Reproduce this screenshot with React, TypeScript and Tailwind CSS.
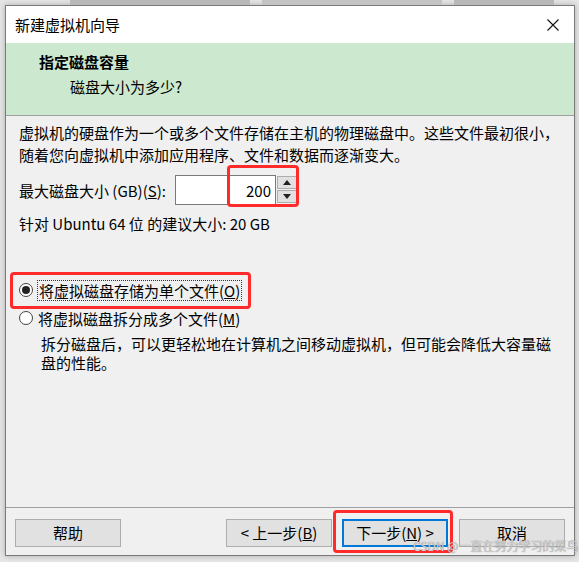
import React from 'react';

const font = "font-['Microsoft_YaHei','Noto_Sans_CJK_SC',sans-serif]";

const Radio: React.FC<{ checked?: boolean }> = ({ checked }) => (
    <span className="flex items-center justify-center w-[14px] h-[14px] rounded-full border border-[#444] bg-white">
        {checked && <span className="w-[8px] h-[8px] rounded-full bg-[#222]" />}
    </span>
);

const Button: React.FC<{ children: React.ReactNode; focused?: boolean; className?: string }> = ({ children, focused, className }) => (
    <div
        className={`flex items-center justify-center w-[106px] h-[28px] bg-[#e1e1e1] text-[15px] text-black ${
            focused ? 'border-2 border-[#0078d7]' : 'border border-[#adadad]'
        } ${className ?? ''}`}
    >
        {children}
    </div>
);

export default function App() {
    return (
        <div className={`relative w-[579px] h-[562px] overflow-hidden bg-[#e6e6e6] ${font}`}>
            {/* background strip behind the dialog */}
            <div className="flex gap-[12px] h-[5px] pl-[70px]">
                <div className="w-[180px] h-full bg-[#b8b8b8]" />
                <div className="w-[180px] h-full bg-[#c4c4c4]" />
                <div className="w-[100px] h-full bg-[#b8b8b8]" />
            </div>

            {/* dialog window */}
            <div className="ml-[5px] w-[570px] h-[551px] flex flex-col border border-[#7a7a7a] bg-[#f0f0f0] shadow-[0_0_6px_rgba(0,0,0,0.25)]">
                {/* title bar */}
                <div className="flex items-center justify-between h-[37px] bg-white pl-[9px] pr-[14px]">
                    <span className="text-[15px] text-black leading-none">新建虚拟机向导</span>
                    <svg width="12" height="12" viewBox="0 0 12 12" className="mr-[1px]">
                        <path d="M0.5 0.5 L11.5 11.5 M11.5 0.5 L0.5 11.5" stroke="#111" strokeWidth="1.1" />
                    </svg>
                </div>

                {/* green header */}
                <div className="h-[73px] bg-[#cce8cf] border-b border-[#a0a0a0] pt-[8px]">
                    <div className="pl-[33px] text-[15px] font-bold leading-[22px] text-black">指定磁盘容量</div>
                    <div className="pl-[64px] mt-[3px] text-[15px] leading-[22px] text-black">磁盘大小为多少?</div>
                </div>

                {/* body */}
                <div className="flex-1 flex flex-col px-[13px] pt-[6px] text-[15px] text-black">
                    <p className="leading-[22px] whitespace-nowrap">
                        虚拟机的硬盘作为一个或多个文件存储在主机的物理磁盘中。这些文件最初很小，
                        <br />
                        随着您向虚拟机中添加应用程序、文件和数据而逐渐变大。
                    </p>

                    <div className="flex items-center mt-[9px] h-[30px]">
                        <span className="w-[156px] leading-none">
                            最大磁盘大小 (GB)(<span className="underline">S</span>):
                        </span>
                        <div className="flex items-center justify-end w-[101px] h-[30px] bg-white border border-[#7a7a7a] pr-[4px] leading-none">
                            200
                        </div>
                        <div className="flex flex-col gap-[1px] ml-[1px] h-[28px]">
                            <div className="flex items-center justify-center w-[20px] h-[13px] bg-[#e1e1e1] border border-[#adadad]">
                                <svg width="8" height="5" viewBox="0 0 8 5"><path d="M4 0 L8 5 L0 5 Z" fill="#222" /></svg>
                            </div>
                            <div className="flex items-center justify-center w-[20px] h-[13px] bg-[#e1e1e1] border border-[#adadad]">
                                <svg width="8" height="5" viewBox="0 0 8 5"><path d="M0 0 L8 0 L4 5 Z" fill="#222" /></svg>
                            </div>
                        </div>
                    </div>

                    <p className="mt-[8px] leading-[22px]">针对 Ubuntu 64 位 的建议大小: 20 GB</p>

                    <div className="flex flex-col mt-[44px] gap-[6px]">
                        <div className="flex items-center gap-[4px] h-[22px]">
                            <Radio checked />
                            <span className="border border-dotted border-[#333] px-[1px] leading-[19px]">
                                将虚拟磁盘存储为单个文件(<span className="underline">O</span>)
                            </span>
                        </div>
                        <div className="flex items-center gap-[5px] h-[22px]">
                            <Radio />
                            <span className="leading-[19px]">
                                将虚拟磁盘拆分成多个文件(<span className="underline">M</span>)
                            </span>
                        </div>
                    </div>

                    <p className="mt-[5px] pl-[22px] leading-[19px] whitespace-nowrap">
                        拆分磁盘后，可以更轻松地在计算机之间移动虚拟机，但可能会降低大容量磁
                        <br />
                        盘的性能。
                    </p>
                </div>

                {/* footer */}
                <div className="h-[48px] border-t border-[#a0a0a0] flex items-start px-[9px] pt-[11px]">
                    <Button>帮助</Button>
                    <div className="flex-1" />
                    <Button>
                        &lt; 上一步(<span className="underline">B</span>)
                    </Button>
                    <Button focused className="ml-[10px]">
                        下一步(<span className="underline">N</span>) &gt;
                    </Button>
                    <Button className="ml-[11px]">取消</Button>
                </div>
            </div>

            {/* red annotation boxes */}
            <div className="absolute left-[227px] top-[165px] w-[72px] h-[42px] rounded-[4px] border-[3px] border-[#ff2b2b]" />
            <div className="absolute left-[10px] top-[272px] w-[241px] h-[37px] rounded-[4px] border-[3px] border-[#ff2b2b]" />
            <div className="absolute left-[333px] top-[510px] w-[120px] h-[43px] rounded-[4px] border-[3px] border-[#ff2b2b]" />

            {/* watermark */}
            <div className="absolute left-[413px] top-[538px] whitespace-nowrap text-[12px] leading-[16px] text-[#d0d0d0] [text-shadow:0_0_1px_#777]">
                CSDN @一直在努力学习的菜鸟
            </div>
        </div>
    );
}
